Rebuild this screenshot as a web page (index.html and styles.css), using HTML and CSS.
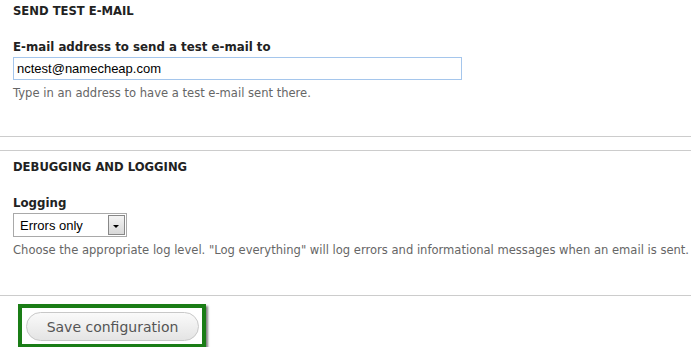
FILE: index.html
```html
<!DOCTYPE html>
<html lang="en">
<head>
    <title>Mail settings</title>
    <meta charset="UTF-8">
    <meta name="viewport" content="width=device-width, initial-scale=1.0">
    <link rel="stylesheet" href="styles.css">
</head>
<body>
    <section class="panel panel-first">
        <h2>Send test e-mail</h2>
        <div class="form-item">
            <label for="testmail">E-mail address to send a test e-mail to</label>
            <input type="text" id="testmail" class="form-text" value="nctest@namecheap.com">
            <div class="description">Type in an address to have a test e-mail sent there.</div>
        </div>
    </section>

    <section class="panel panel-second">
        <h2>Debugging and logging</h2>
        <div class="form-item">
            <label for="logging">Logging</label>
            <div class="select">
                <span class="select-value">Errors only</span>
                <span class="select-arrow"></span>
            </div>
            <div class="description">Choose the appropriate log level. "Log everything" will log errors and informational messages when an email is sent.</div>
        </div>
    </section>

    <div class="actions">
        <div class="highlight">
            <button class="form-submit">Save configuration</button>
        </div>
    </div>
</body>
</html>
```

FILE: styles.css
```css
body {
    margin: 0;
    padding: 0;
    background-color: #fff;
    font-family: "DejaVu Sans", Verdana, sans-serif;
    color: #333;
    overflow: hidden;
}
.panel {
    padding: 0 0 0 13px;
}
.panel-first {
    height: 136px;
    border-bottom: 1px solid #ccc;
}
.panel-second {
    margin-top: 13px;
    height: 144px;
    border-top: 1px solid #ccc;
    border-bottom: 1px solid #ccc;
}
h2 {
    margin: 0;
    padding-top: 4px;
    font-size: 11.6px;
    line-height: 14px;
    text-transform: uppercase;
    color: #222;
}
.panel-second h2 {
    padding-top: 9px;
}
.form-item {
    margin-top: 21px;
}
label {
    display: block;
    font-size: 11.8px;
    font-weight: bold;
    line-height: 16px;
    color: #222;
}
.form-text {
    display: block;
    box-sizing: border-box;
    width: 449px;
    height: 23px;
    margin: 2px 0 0;
    padding: 0 3px;
    border: 1px solid #a5c6ec;
    font-family: "Liberation Sans", Arial, sans-serif;
    font-size: 13px;
    color: #000;
    outline: none;
}
.description {
    margin-top: 6px;
    font-size: 11.55px;
    line-height: 14px;
    color: #666;
    white-space: nowrap;
}
.select {
    display: flex;
    box-sizing: border-box;
    width: 114px;
    height: 24px;
    margin-top: 2px;
    border: 1px solid #a9a9a9;
    font-family: "Liberation Sans", Arial, sans-serif;
    font-size: 13px;
    color: #000;
}
.select-value {
    flex: 1;
    padding: 4px 0 0 6px;
}
.select-arrow {
    position: relative;
    width: 15px;
    margin: 1px;
    border: 1px solid #888;
    background: linear-gradient(#f4f4f4, #d8d8d8);
}
.select-arrow::after {
    content: "";
    position: absolute;
    left: 4px;
    top: 9px;
    border-left: 3px solid transparent;
    border-right: 3px solid transparent;
    border-top: 3px solid #000;
}
.actions {
    padding: 8px 0 0 18px;
}
.highlight {
    display: inline-block;
    border: 4px solid #1a7d16;
    padding: 4px 3px 3px 4px;
    box-shadow: 2px 2px 2px rgba(0, 0, 0, 0.5);
}
.form-submit {
    display: block;
    width: 173px;
    height: 29px;
    border: 1px solid #c8c8c8;
    border-radius: 15px;
    background: linear-gradient(#fafafa, #e4e4e4);
    font-family: "DejaVu Sans", Verdana, sans-serif;
    font-size: 14px;
    color: #555;
    cursor: pointer;
}
```
